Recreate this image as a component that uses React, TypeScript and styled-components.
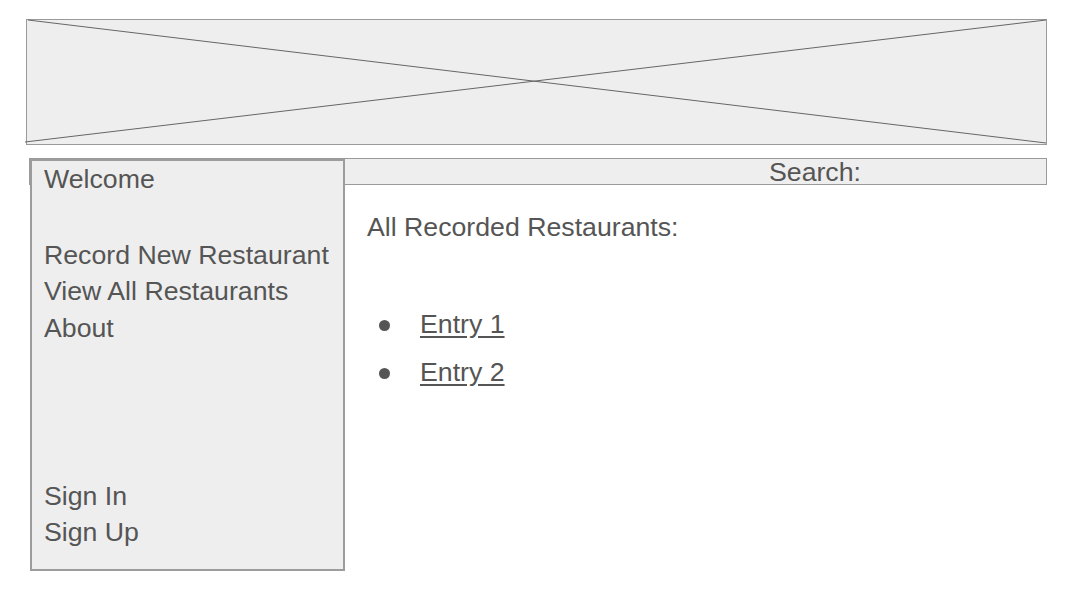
import React from "react";
import styled, { createGlobalStyle } from "styled-components";

const Global = createGlobalStyle`
  html, body { margin: 0; padding: 0; background: #ffffff; }
  body { font-family: "Liberation Sans", Arial, sans-serif; color: #555555; }
  * { box-sizing: border-box; }
`;

const Page = styled.div`
  width: 1072px;
  height: 598px;
  padding: 19px 25px 0 26px;
  display: flex;
  flex-direction: column;
  gap: 13px;
`;

const Banner = styled.div`
  position: relative;
  width: 1021px;
  height: 126px;
  background: #eeeeee;
  border: 1px solid #9a9a9a;
`;

const BannerCross = styled.svg`
  position: absolute;
  left: -1px;
  top: -1px;
  overflow: visible;
`;

const Body = styled.div`
  margin-left: 3px;
  width: 1018px;
  display: grid;
  grid-template-columns: 316px 1fr;
  grid-template-rows: 27px auto;
`;

const SearchBar = styled.div`
  grid-column: 1 / -1;
  grid-row: 1;
  height: 27px;
  background: #eeeeee;
  border: 1px solid #9a9a9a;
  padding-left: 739px;
  font-size: 26.7px;
  line-height: 26px;
  white-space: nowrap;
`;

const Sidebar = styled.nav`
  grid-column: 1;
  grid-row: 1 / 3;
  position: relative;
  z-index: 1;
  margin: 1px 0 0 1px;
  height: 412px;
  background: #eeeeee;
  border: 2px solid #9c9c9c;
  padding: 0 0 18px 12px;
  display: flex;
  flex-direction: column;
`;

const NavGroup = styled.div<{ $top: string }>`
  display: flex;
  flex-direction: column;
  margin-top: ${(p) => p.$top};
`;

const NavItem = styled.div`
  font-size: 26.7px;
  line-height: 36.6px;
  white-space: nowrap;
`;

const Main = styled.main`
  grid-column: 2;
  grid-row: 2;
  padding-left: 22px;
`;

const Heading = styled.h2`
  margin: 27px 0 0 0;
  font-weight: normal;
  font-size: 26.7px;
  line-height: normal;
`;

const EntryList = styled.ul`
  list-style: none;
  margin: 57px 0 0 -22px;
  padding: 0;
`;

const EntryRow = styled.li`
  display: flex;
  align-items: center;
  height: 48px;
  font-size: 26.7px;
  line-height: 48px;
`;

const Bullet = styled.span`
  width: 11px;
  height: 11px;
  border-radius: 50%;
  background: #555555;
  margin-left: 34px;
  margin-right: 30px;
  margin-top: 2px;
  flex: none;
`;

const EntryLink = styled.a`
  color: #555555;
  text-decoration: underline;
  text-underline-offset: 3px;
`;

export default function App() {
  return (
    <>
      <Global />
      <Page>
        <Banner>
          <BannerCross width="1021" height="126">
            <line x1="2" y1="1" x2="1020" y2="124" stroke="#666666" strokeWidth="1" />
            <line x1="-1" y1="123" x2="1020" y2="1" stroke="#666666" strokeWidth="1" />
          </BannerCross>
        </Banner>
        <Body>
          <SearchBar>Search:</SearchBar>
          <Sidebar>
            <NavGroup $top="0px">
              <NavItem>Welcome</NavItem>
            </NavGroup>
            <NavGroup $top="39px">
              <NavItem>Record New Restaurant</NavItem>
              <NavItem>View All Restaurants</NavItem>
              <NavItem>About</NavItem>
            </NavGroup>
            <NavGroup $top="auto">
              <NavItem>Sign In</NavItem>
              <NavItem>Sign Up</NavItem>
            </NavGroup>
          </Sidebar>
          <Main>
            <Heading>All Recorded Restaurants:</Heading>
            <EntryList>
              <EntryRow>
                <Bullet />
                <EntryLink href="#">Entry 1</EntryLink>
              </EntryRow>
              <EntryRow>
                <Bullet />
                <EntryLink href="#">Entry 2</EntryLink>
              </EntryRow>
            </EntryList>
          </Main>
        </Body>
      </Page>
    </>
  );
}
